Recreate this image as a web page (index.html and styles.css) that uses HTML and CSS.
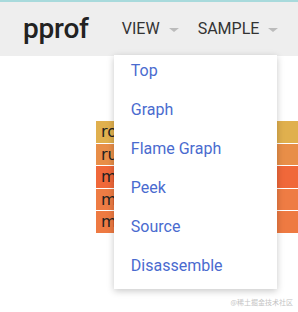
FILE: index.html
```html
<!DOCTYPE html>
<html>
<head>
<meta charset="utf-8">
<link rel="stylesheet" href="styles.css">
</head>
<body>
<header class="topbar">
  <div class="logo">pprof</div>
  <nav class="menus">
    <div class="menu-btn view-btn">VIEW<span class="caret"></span>
      <ul class="dropdown">
        <li>Top</li>
        <li>Graph</li>
        <li>Flame Graph</li>
        <li>Peek</li>
        <li>Source</li>
        <li>Disassemble</li>
      </ul>
    </div>
    <div class="menu-btn">SAMPLE<span class="caret"></span></div>
  </nav>
</header>
<main class="content">
  <div class="flame">
    <div class="frame c1">root</div>
    <div class="frame c2">runtime.main</div>
    <div class="frame c3">main.main</div>
    <div class="frame c4">main.run</div>
    <div class="frame c5">main.work</div>
  </div>
</main>
<div class="watermark">@稀土掘金技术社区</div>
</body>
</html>
```
FILE: styles.css
```css
html, body {
  margin: 0;
  padding: 0;
  background: #fff;
  width: 298px;
  height: 312px;
  overflow: hidden;
  font-family: Roboto, "Noto Sans", sans-serif;
}
.topbar {
  box-sizing: border-box;
  height: 56px;
  border-top: 2px solid #a8dadc;
  background: #eeeeee;
  display: flex;
  align-items: stretch;
  padding-left: 23px;
}
.logo {
  font-size: 28px;
  font-weight: 500;
  color: #222;
  align-self: center;
  margin-top: -2px;
  letter-spacing: -0.2px;
}
.menus {
  display: flex;
  margin-left: 33px;
  gap: 19px;
}
.menu-btn {
  position: relative;
  display: flex;
  align-items: center;
  font-size: 16px;
  color: #333;
  margin-top: -2px;
}
.caret {
  display: inline-block;
  width: 0;
  height: 0;
  margin-left: 9px;
  margin-top: 3px;
  border-left: 5px solid transparent;
  border-right: 5px solid transparent;
  border-top: 4px solid #bbb;
}
.dropdown {
  position: absolute;
  left: -8px;
  top: calc(100% - 1px);
  width: 163px;
  margin: 0;
  padding: 0;
  list-style: none;
  background: #fff;
  box-shadow: 0 2px 7px rgba(0, 0, 0, 0.22);
  z-index: 5;
}
.dropdown li {
  padding: 4px 0 11px 17px;
  line-height: 24px;
  font-size: 16px;
  color: #4a6bcf;
}
.content {
  padding: 65px 0 0 96px;
}
.flame {
  display: flex;
  flex-direction: column;
  gap: 1px;
}
.frame {
  height: 21.5px;
  line-height: 22px;
  padding-left: 5px;
  font-family: "DejaVu Sans", sans-serif;
  font-size: 16px;
  color: #222;
  white-space: nowrap;
  overflow: hidden;
}
.c1 { background: #e0b04e; }
.c2 { background: #e88e48; }
.c3 { background: #f0683a; }
.c4 { background: #ee7c44; }
.c5 { background: #ee7a42; }
.watermark {
  position: absolute;
  right: 5px;
  bottom: 5px;
  font-family: "Noto Sans CJK SC", sans-serif;
  font-size: 7px;
  color: #c4c4c4;
}
```
